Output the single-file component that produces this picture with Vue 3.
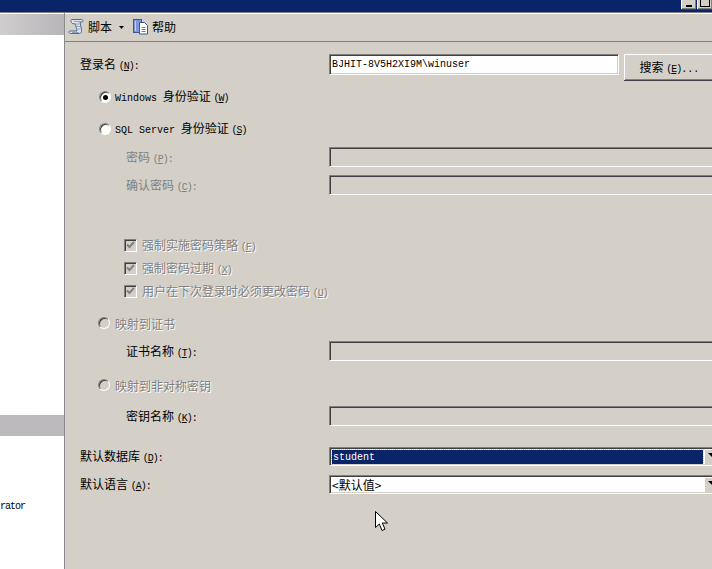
<script setup>
</script>

<template>
  <div class="window">
    <header class="titlebar">
      <span class="winbtn"><i class="min"></i></span>
      <span class="winbtn"><i class="max"></i></span>
    </header>
    <div class="panes">
      <aside class="side">
        <div class="band"></div>
        <div class="band second"></div>
        <div class="clip"><span class="lat tight">rator</span></div>
      </aside>
      <main class="content">
        <nav class="toolbar">
          <svg class="icon" width="17" height="17" viewBox="0 0 17 17">
            <path d="M3.500 1.500h10c1.500 0 2 1.800.8 2.500h-2.300L13.500 12c.3 2-.5 3.500-2 3.500H2.500c-1.500 0-2-1.800-1-2.500h7.500L7.500 6 4.500 5.500C2.800 4.500 2.500 2 3.500 1.500z" fill="#dfe5ee" stroke="#4d6a94"/>
            <path d="M6 3.500h6M6.500 6h5M7.500 8.500h4.500M8 11h4M4 14.500h7" stroke="#8ea2bf" fill="none"/>
          </svg>
          <span class="tool-text">脚本</span>
          <svg class="caret" width="5" height="3" viewBox="0 0 5 3"><path d="M0 0h5L2.500 3z" fill="#000"/></svg>
          <svg class="icon help" width="17" height="17" viewBox="0 0 17 17">
            <rect x="1.500" y="1.500" width="8" height="13" fill="#7f97d6" stroke="#3f5596"/>
            <path d="M3.500 3v10" stroke="#c9d4f0"/>
            <path d="M7.500 4.500h5l3 3v8.500h-8z" fill="#fff" stroke="#3f5596"/>
            <path d="M9.500 9.500h4M9.500 11.500h4M9.500 13.500h4" stroke="#6d84a8"/>
          </svg>
          <span class="tool-text">帮助</span>
        </nav>
        <form class="form" @submit.prevent>
          <div class="row login">
            <label class="label">登录名 <span class="lat mn">(<u>N</u>):</span></label>
            <div class="login-field">
              <div class="input lat value">BJHIT-8V5H2XI9M\winuser</div>
              <button type="button" class="search">搜索 <span class="lat"><span class="mn">(<u>E</u>)</span>...</span></button>
            </div>
          </div>

          <div class="row opt mt12">
            <span class="radio checked"></span>
            <span class="opt-text"><span class="lat word">Windows</span> 身份验证 <span class="lat mn">(<u>W</u>)</span></span>
          </div>
          <div class="row opt mt12">
            <span class="radio"></span>
            <span class="opt-text"><span class="lat word">SQL Server</span> 身份验证 <span class="lat mn">(<u>S</u>)</span></span>
          </div>

          <div class="row mt8">
            <label class="label sub off">密码 <span class="lat mn">(<u>P</u>):</span></label>
            <div class="input off-input"></div>
          </div>
          <div class="row mt8">
            <label class="label sub off">确认密码 <span class="lat mn">(<u>C</u>):</span></label>
            <div class="input off-input"></div>
          </div>

          <div class="row check mt40">
            <span class="box"><svg width="9" height="8" viewBox="0 0 9 8"><path d="M1 3.500l2.500 2.500L8 1" stroke="#808080" stroke-width="2" fill="none"/></svg></span>
            <span class="off emboss">强制实施密码策略 <span class="lat mn">(<u>F</u>)</span></span>
          </div>
          <div class="row check mt3">
            <span class="box"><svg width="9" height="8" viewBox="0 0 9 8"><path d="M1 3.500l2.500 2.500L8 1" stroke="#808080" stroke-width="2" fill="none"/></svg></span>
            <span class="off emboss">强制密码过期 <span class="lat mn">(<u>X</u>)</span></span>
          </div>
          <div class="row check mt3">
            <span class="box"><svg width="9" height="8" viewBox="0 0 9 8"><path d="M1 3.500l2.500 2.500L8 1" stroke="#808080" stroke-width="2" fill="none"/></svg></span>
            <span class="off emboss">用户在下次登录时必须更改密码 <span class="lat mn">(<u>U</u>)</span></span>
          </div>

          <div class="row opt dim mt12">
            <span class="radio disabled"></span>
            <span class="off emboss">映射到证书</span>
          </div>
          <div class="row mt8">
            <label class="label sub">证书名称 <span class="lat mn">(<u>T</u>):</span></label>
            <div class="input off-input"></div>
          </div>
          <div class="row opt dim mt14">
            <span class="radio disabled"></span>
            <span class="off emboss">映射到非对称密钥</span>
          </div>
          <div class="row mt11">
            <label class="label sub">密钥名称 <span class="lat mn">(<u>K</u>):</span></label>
            <div class="input off-input"></div>
          </div>

          <div class="row combo mt21">
            <label class="label">默认数据库 <span class="lat mn">(<u>D</u>):</span></label>
            <div class="input select">
              <span class="selected lat">student</span>
              <span class="drop"><i></i></span>
            </div>
          </div>
          <div class="row combo mt9">
            <label class="label">默认语言 <span class="lat mn">(<u>A</u>):</span></label>
            <div class="input select">
              <span class="plain">&lt;默认值&gt;</span>
              <span class="drop"><i></i></span>
            </div>
          </div>
        </form>
        <svg class="cursor" width="13" height="21" viewBox="0 0 13 21">
          <path d="M.5.500v16l3.800-3.500 2.700 6.500 3-1.300-2.700-6.200h5.200z" fill="#fff" stroke="#000"/>
        </svg>
      </main>
    </div>
  </div>
</template>

<style>
html, body { margin: 0; padding: 0; background: #d4d0c8; }
</style>

<style scoped>
.window {
  width: 712px;
  height: 569px;
  overflow: hidden;
  display: flex;
  flex-direction: column;
  background: #d4d0c8;
  color: #000;
  font: 12px/14px "Noto Sans CJK SC", sans-serif;
}
.lat { font-family: "Liberation Mono", monospace; font-size: 10px; }
.mn { letter-spacing: -1px; }
.tight { letter-spacing: -1px; }
.word { margin-right: 3px; }
u { text-underline-offset: 1px; }

.titlebar {
  height: 12px;
  flex: none;
  background: #0a246a;
  display: flex;
  justify-content: flex-end;
  gap: 1px;
  overflow: hidden;
}
.winbtn {
  width: 15px;
  height: 9px;
  background: #d4d0c8;
  border-left: 1px solid #fff;
  box-shadow: inset -1px -1px 0 #808080, 0 1px 0 #404040;
  box-sizing: border-box;
  position: relative;
}
.min { position: absolute; left: 4px; bottom: 2px; width: 6px; height: 2px; background: #000; }
.max { position: absolute; left: 2px; top: -2px; width: 10px; height: 9px; box-sizing: border-box; border: 1px solid #000; }

.panes {
  flex: 1;
  display: flex;
  min-height: 0;
  border-top: 1px solid #808080;
  box-shadow: inset 0 1px 0 #fff;
}
.side {
  width: 64px;
  flex: none;
  background: #fff;
  border-right: 1px solid #8a8a8a;
  position: relative;
  padding-top: 1px;
  overflow: hidden;
}
.band {
  height: 21px;
  background: linear-gradient(90deg, #cfcdce, #b8b5b8);
}
.band.second { margin-top: 380px; background: linear-gradient(90deg, #bdbabd, #bcb9bc); }
.clip {
  margin-top: 61px;
  height: 14px;
}

.content {
  flex: 1;
  min-width: 0;
  position: relative;
  padding-top: 1px;
}
.toolbar {
  height: 28px;
  box-sizing: border-box;
  border-bottom: 1px solid #808080;
  display: flex;
  align-items: center;
  padding: 0 0 2px 3px;
}
.icon { flex: none; margin-right: 3px; }
.tool-text { width: 24px; }
.caret { margin: 1px 0 0 7px; flex: none; }
.help { margin-left: 8px; }

.form {
  padding: 12px 0 0 15px;
  display: flex;
  flex-direction: column;
}
.row {
  display: flex;
  align-items: center;
  height: 20px;
  white-space: nowrap;
  min-width: 0;
}
.login { height: 21px; align-items: flex-start; }
.combo { height: 19px; }
.mt3 { margin-top: 3px; }
.mt8 { margin-top: 8px; }
.mt9 { margin-top: 9px; }
.mt11 { margin-top: 11px; }
.mt12 { margin-top: 12px; }
.mt14 { margin-top: 14px; }
.mt21 { margin-top: 21px; }
.mt40 { margin-top: 40px; }

.label { width: 249px; flex: none; padding-top: 2px; }
.login .label { line-height: 20px; padding-top: 0; }
.sub { padding-left: 46px; box-sizing: border-box; }
.off { color: #808080; }
.emboss { text-shadow: 1px 1px 0 #fff; padding-top: 2px; }

.login-field { display: flex; flex: none; gap: 5px; }
.input {
  height: 20px;
  width: 400px;
  box-sizing: border-box;
  flex: none;
  background: #fff;
  border-top: 1px solid #808080;
  border-left: 1px solid #808080;
  border-bottom: 1px solid #fff;
  border-right: 1px solid #fff;
  box-shadow: inset 1px 1px 0 #404040, inset -1px -1px 0 #d4d0c8;
  display: flex;
  align-items: center;
}
.value { width: 290px; height: 21px; padding-left: 2px; }
.off-input { background: #d4d0c8; }
.search {
  width: 90px;
  height: 26px;
  flex: none;
  padding: 2px 0 0;
  background: #d4d0c8;
  border: 0;
  border-top: 1px solid #fff;
  border-left: 1px solid #fff;
  box-shadow: inset 0 -1px 0 #808080, 0 1px 0 #404040;
  font: inherit;
  color: #000;
  text-align: center;
}
.select { height: 19px; padding: 1px 0 1px 2px; }
.selected {
  flex: none;
  width: 371px;
  height: 14px;
  line-height: 15px;
  box-sizing: border-box;
  background: #0a246a;
  color: #fff;
  outline: 1px dotted #e8d870;
  outline-offset: 0;
  padding-left: 1px;
}
.plain { flex: none; width: 371px; padding-top: 1px; }
.drop {
  width: 17px;
  height: 15px;
  flex: none;
  background: #d4d0c8;
  border-top: 1px solid #fff;
  border-left: 1px solid #fff;
  box-sizing: border-box;
  margin-left: 1px;
  position: relative;
}
.drop i {
  position: absolute;
  left: 3px;
  top: 3px;
  border: 4px solid transparent;
  border-top: 4px solid #000;
  border-bottom: 0;
}

.opt { padding-left: 19px; }
.opt.dim { padding-left: 18px; }
.opt-text { margin-left: 4px; padding-top: 1px; }
.opt.dim .off { margin-left: 5px; }
.radio {
  width: 12px;
  height: 12px;
  flex: none;
  box-sizing: border-box;
  border-radius: 50%;
  background: #fff;
  border: 1px solid;
  border-color: #808080 #fff #fff #808080;
  box-shadow: inset 1px 1px 0 #404040;
  position: relative;
}
.radio.disabled { background: #d4d0c8; }
.radio.checked::after {
  content: "";
  position: absolute;
  left: 3px;
  top: 3px;
  width: 5px;
  height: 5px;
  border-radius: 50%;
  background: #000;
}

.check { padding-left: 44px; }
.box {
  width: 13px;
  height: 13px;
  flex: none;
  box-sizing: border-box;
  margin-right: 5px;
  background: #d4d0c8;
  border: 1px solid;
  border-color: #808080 #fff #fff #808080;
  box-shadow: inset 1px 1px 0 #404040;
  display: flex;
  align-items: center;
  justify-content: center;
}

.cursor { position: absolute; left: 310px; top: 498px; }
</style>
